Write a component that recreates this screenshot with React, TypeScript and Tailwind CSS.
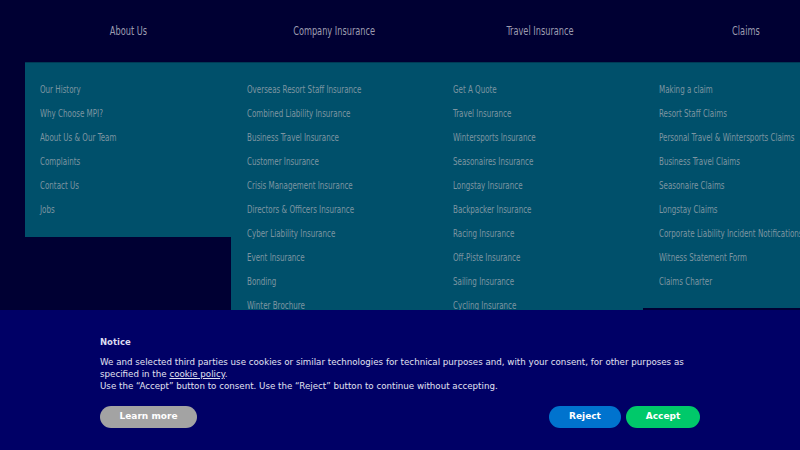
import React from "react";

const cols: { title: string; items: string[]; h: string }[] = [
  {
    title: "About Us",
    items: ["Our History", "Why Choose MPI?", "About Us & Our Team", "Complaints", "Contact Us", "Jobs"],
    h: "h-[175px]",
  },
  {
    title: "Company Insurance",
    items: [
      "Overseas Resort Staff Insurance",
      "Combined Liability Insurance",
      "Business Travel Insurance",
      "Customer Insurance",
      "Crisis Management Insurance",
      "Directors & Officers Insurance",
      "Cyber Liability Insurance",
      "Event Insurance",
      "Bonding",
      "Winter Brochure",
    ],
    h: "h-[300px]",
  },
  {
    title: "Travel Insurance",
    items: [
      "Get A Quote",
      "Travel Insurance",
      "Wintersports Insurance",
      "Seasonaires Insurance",
      "Longstay Insurance",
      "Backpacker Insurance",
      "Racing Insurance",
      "Off-Piste Insurance",
      "Sailing Insurance",
      "Cycling Insurance",
    ],
    h: "h-[300px]",
  },
  {
    title: "Claims",
    items: [
      "Making a claim",
      "Resort Staff Claims",
      "Personal Travel & Wintersports Claims",
      "Business Travel Claims",
      "Seasonaire Claims",
      "Longstay Claims",
      "Corporate Liability Incident Notifications",
      "Witness Statement Form",
      "Claims Charter",
    ],
    h: "h-[246px]",
  },
];

const narrow = { fontFamily: '"DejaVu Sans Condensed", "Liberation Sans", sans-serif' };

export default function App() {
  return (
    <div className="relative w-[800px] h-[450px] overflow-hidden bg-[#000033]">
      <div className="flex pl-[25px]">
        {cols.map((c, i) => (
          <div key={c.title} className="w-[206px] shrink-0 flex flex-col">
            <div className="h-[62px] flex items-center justify-center">
              <span className="inline-block text-[12.5px] text-[#9c9cb0] scale-x-[0.73] whitespace-nowrap" style={narrow}>
                {c.title}
              </span>
            </div>
            <div className={`${c.h} bg-[#00506b] border-t border-[#003a55] pt-[15px] ${i === 0 ? "pl-[15px]" : "pl-[16px]"}`}>
              {c.items.map((it) => (
                <div key={it} className="h-[24px] flex items-center whitespace-nowrap">
                  <span className="inline-block origin-left scale-x-[0.72] text-[11px] text-[#7d95a1]" style={narrow}>
                    {it}
                  </span>
                </div>
              ))}
            </div>
          </div>
        ))}
      </div>
      <div
        className="absolute left-0 right-0 bottom-0 h-[140px] bg-[#000066] text-[#dcdcf0] px-[100px] pt-[26px]"
        style={{ fontFamily: '"DejaVu Sans", Verdana, sans-serif' }}
      >
        <div className="text-[8.5px] font-bold">Notice</div>
        <div className="mt-[7px] text-[8.7px] leading-[12px] text-[#e2e2f2]">
          We and selected third parties use cookies or similar technologies for technical purposes and, with your consent, for other purposes as specified in the{" "}
          <span className="underline">cookie policy</span>.
          <br />
          Use the “Accept” button to consent. Use the “Reject” button to continue without accepting.
        </div>
        <div className="mt-[14px] flex items-center">
          <button className="w-[97px] h-[22px] rounded-full bg-[#a3a3a3] text-white text-[9px] font-bold">Learn more</button>
          <div className="flex-1" />
          <button className="w-[72px] h-[22px] rounded-full bg-[#0073ce] text-white text-[9px] font-bold">Reject</button>
          <button className="ml-[5px] w-[74px] h-[22px] rounded-full bg-[#00c96a] text-white text-[9px] font-bold">Accept</button>
        </div>
      </div>
    </div>
  );
}
